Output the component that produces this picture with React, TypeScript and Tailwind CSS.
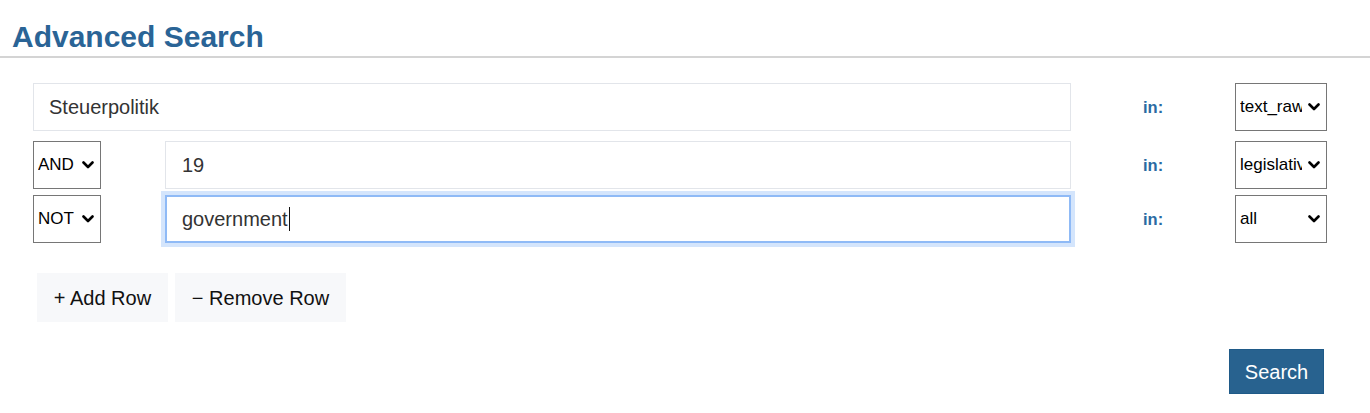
import React from "react";

const Chevron = () => (
  <svg
    className="pointer-events-none absolute right-[7px] top-1/2 -translate-y-1/2"
    width="12"
    height="8"
    viewBox="0 0 12 8"
  >
    <path d="M1.5 1.5 L6 6 L10.5 1.5" fill="none" stroke="#000" strokeWidth="2.6" strokeLinecap="round" strokeLinejoin="round" />
  </svg>
);

function Select({ value, options, width }: { value: string; options: string[]; width: string }) {
  return (
    <div className={`relative h-[48px] shrink-0 ${width}`}>
      <select
        defaultValue={value}
        className="h-full w-full appearance-none overflow-hidden border border-[#767676] bg-white pl-[4px] pr-[24px] text-[17px] text-black outline-none"
      >
        {options.map((o) => (
          <option key={o} value={o}>
            {o}
          </option>
        ))}
      </select>
      <Chevron />
    </div>
  );
}

function InLabel() {
  return (
    <div className="w-[164px] shrink-0 pl-[72px] text-[16.5px] font-bold text-[#2a6aa3]">in:</div>
  );
}

export default function App() {
  return (
    <div className="min-h-[413px] w-[1370px] bg-white" style={{ fontFamily: '"Liberation Sans", Arial, sans-serif' }}>
      <div className="border-b-2 border-[#d4d4d4] px-[12px] pt-[19px] pb-[1px]">
        <h1 className="text-[30px] leading-[36px] font-bold text-[#2a6496]">Advanced Search</h1>
      </div>

      <div className="ml-[33px] w-[1294px] pt-[25px]">
        {/* Row 1 */}
        <div className="mb-[10px] flex items-center">
          <div className="flex-1">
            <input
              defaultValue="Steuerpolitik"
              className="h-[48px] w-full border border-[#e2e5ea] bg-white px-[15px] text-[20px] text-[#333] outline-none"
            />
          </div>
          <InLabel />
          <Select value="text_raw" options={["text_raw", "title", "speaker"]} width="w-[92px]" />
        </div>

        {/* Row 2 */}
        <div className="mb-[6px] flex items-center">
          <div className="flex flex-1 items-center gap-[64px]">
            <Select value="AND" options={["AND", "OR", "NOT"]} width="w-[68px]" />
            <input
              defaultValue="19"
              className="h-[48px] flex-1 border border-[#e2e5ea] bg-white px-[16px] text-[20px] text-[#333] outline-none"
            />
          </div>
          <InLabel />
          <Select value="legislative_period" options={["legislative_period", "all", "text_raw"]} width="w-[92px]" />
        </div>

        {/* Row 3 */}
        <div className="flex items-center">
          <div className="flex flex-1 items-center gap-[64px]">
            <Select value="NOT" options={["AND", "OR", "NOT"]} width="w-[68px]" />
            <div className="flex h-[48px] flex-1 items-center border-2 border-[#8fbaf6] bg-white px-[15px] text-[20px] text-[#333] shadow-[0_0_0_4px_#d4e5fc]">
              <span>government</span>
              <span className="ml-[1px] inline-block h-[24px] w-[1.5px] bg-[#111]" />
            </div>
          </div>
          <InLabel />
          <Select value="all" options={["all", "text_raw", "legislative_period"]} width="w-[92px]" />
        </div>

        {/* Add / Remove */}
        <div className="ml-[4px] mt-[30px] flex gap-[7px]">
          <button className="h-[49px] w-[131px] bg-[#f7f8fa] text-[20px] text-[#111]">+ Add Row</button>
          <button className="h-[49px] w-[171px] bg-[#f7f8fa] text-[20px] text-[#111]">− Remove Row</button>
        </div>

        {/* Search */}
        <div className="mt-[27px] flex justify-end pr-[3px]">
          <button className="h-[45px] w-[95px] border border-[#1f5a88] bg-[#28628f] text-[20px] text-white">Search</button>
        </div>
      </div>
    </div>
  );
}
